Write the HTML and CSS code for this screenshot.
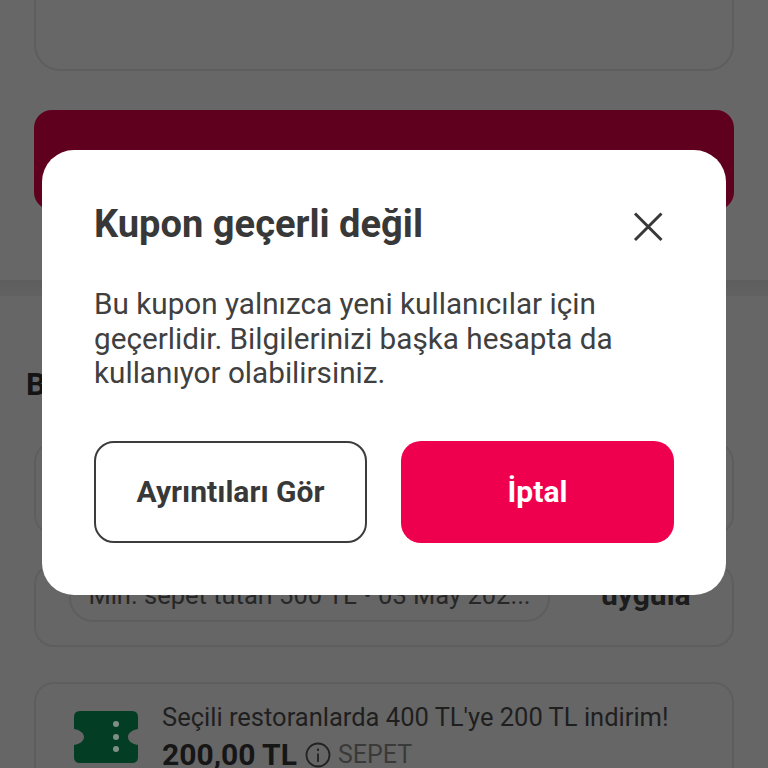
FILE: index.html
```html
<!DOCTYPE html>
<html lang="tr">
<head>
<meta charset="utf-8">
<title>Kupon geçerli değil</title>
<link rel="stylesheet" href="styles.css">
</head>
<body>
<div class="page">
  <section class="top">
    <div class="top-card"></div>
    <div class="cta"></div>
  </section>
  <section class="list">
    <h2 class="list-title">Bu</h2>
    <div class="coupon coupon-first"></div>
    <div class="coupon coupon-second">
      <div class="pill">Min. sepet tutarı 500 TL • 03 May 202...</div>
      <div class="apply">uygula</div>
    </div>
    <div class="coupon coupon-third">
      <svg class="ticket" viewBox="0 0 64 52" aria-hidden="true">
        <path class="ticket-body" d="M6 0H58Q64 0 64 6V18C58 19 54 22 54 26C54 30 58 33 64 34V46Q64 52 58 52H6Q0 52 0 46V34C6 33 10 30 10 26C10 22 6 19 0 18V6Q0 0 6 0Z"/>
        <circle class="ticket-dot" cx="42" cy="13" r="3"/>
        <circle class="ticket-dot" cx="42" cy="26" r="3"/>
        <circle class="ticket-dot" cx="42" cy="38" r="3"/>
      </svg>
      <div class="coupon-text">
        <div class="coupon-name">Seçili restoranlarda 400 TL'ye 200 TL indirim!</div>
        <div class="coupon-meta">
          <span class="amount">200,00 TL</span>
          <svg class="info" viewBox="0 0 26 26" aria-hidden="true">
            <circle cx="13" cy="13" r="11.5"/>
            <path d="M13 11.5V20M13 6.5V9"/>
          </svg>
          <span class="tag">SEPET</span>
        </div>
      </div>
    </div>
  </section>
  <div class="dialog" role="dialog">
    <div class="dialog-head">
      <h1 class="dialog-title">Kupon geçerli değil</h1>
      <svg class="close" viewBox="0 0 30 30" aria-hidden="true"><path d="M2 1.5 28.5 28M28.5 1.5 2 28"/></svg>
    </div>
    <p class="dialog-body">Bu kupon yalnızca yeni kullanıcılar için geçerlidir. Bilgilerinizi başka hesapta da kullanıyor olabilirsiniz.</p>
    <div class="dialog-actions">
      <button class="btn btn-outline">Ayrıntıları Gör</button>
      <button class="btn btn-primary">İptal</button>
    </div>
  </div>
</div>
</body>
</html>
```
FILE: styles.css
```css
* { box-sizing: border-box; }
html, body { margin: 0; padding: 0; }
body { font-family: Roboto, "Noto Sans", sans-serif; background: #666; }
.page { position: relative; width: 768px; height: 768px; overflow: hidden; background: #666; }
.top { height: 296px; padding: 0 34px; background: linear-gradient(#676767 280px, #5e5e5e 280px, #626262 296px); }
.top-card { height: 71px; border: 2px solid #5e5e5e; border-top: 0; border-radius: 0 0 26px 26px; }
.cta { height: 100px; margin-top: 39px; background: #5f001f; border-radius: 18px; }
.list { padding: 0 34px; background: #666; }
.list-title { margin: 0; padding-top: 70px; font-size: 31px; line-height: 38px; font-weight: 700; color: #141414; margin-left: -8px; }
.coupon { border: 2px solid #5e5e5e; border-radius: 20px; }
.coupon-first { height: 93px; margin-top: 38px; }
.coupon-second { position: relative; height: 83px; margin-top: 29px; padding-left: 33px; }
.pill { width: 481px; height: 58px; margin-top: -2px; padding: 14px 16px 0; border: 2px solid #5e5e5e; border-radius: 0 0 24px 24px; font-size: 25.5px; line-height: 30px; color: #272727; white-space: nowrap; overflow: hidden; text-align: center; }
.apply { position: absolute; left: 565px; top: 11px; font-size: 30px; line-height: 36px; font-weight: 700; color: #1c1c1c; }
.coupon-third { display: flex; gap: 23px; height: 120px; margin-top: 35px; padding: 18px 0 0 38px; }
.ticket { width: 64px; height: 52px; margin-top: 9px; flex: none; }
.ticket-body { fill: #033d24; }
.ticket-dot { fill: #7f8f86; }
.coupon-text { margin-left: 1px; }
.coupon-name { font-size: 25.5px; line-height: 30px; color: #1f1f1f; white-space: nowrap; }
.coupon-meta { display: flex; align-items: center; gap: 8px; margin-top: 5px; }
.amount { font-size: 30px; line-height: 36px; font-weight: 700; color: #161616; }
.info { width: 26px; height: 26px; fill: none; stroke: #222; stroke-width: 1.8; }
.tag { font-size: 25px; line-height: 30px; color: #3a3a3a; margin-left: -1px; }
.dialog { position: absolute; left: 42px; top: 150px; width: 684px; height: 445px; padding: 52px 52px 0; background: #fff; border-radius: 32px; }
.dialog-head { display: flex; justify-content: space-between; align-items: flex-start; }
.dialog-title { margin: 0; font-size: 38.1px; line-height: 44px; font-weight: 700; color: #383838; }
.close { width: 30px; height: 30px; margin: 10px 11px 0 0; fill: none; stroke: #383838; stroke-width: 3; flex: none; }
.dialog-body { margin: 41px 0 0; font-size: 29.7px; line-height: 34.5px; color: #404040; }
.dialog-actions { display: grid; grid-template-columns: 1fr 1fr; gap: 34px; margin-top: 50px; }
.btn { height: 102px; border-radius: 20px; font-family: inherit; font-size: 30px; font-weight: 700; padding: 0; }
.btn-outline { background: #fff; border: 2px solid #3c3c3c; color: #383838; }
.btn-primary { background: #ef004f; border: 0; color: #fff; }
```
